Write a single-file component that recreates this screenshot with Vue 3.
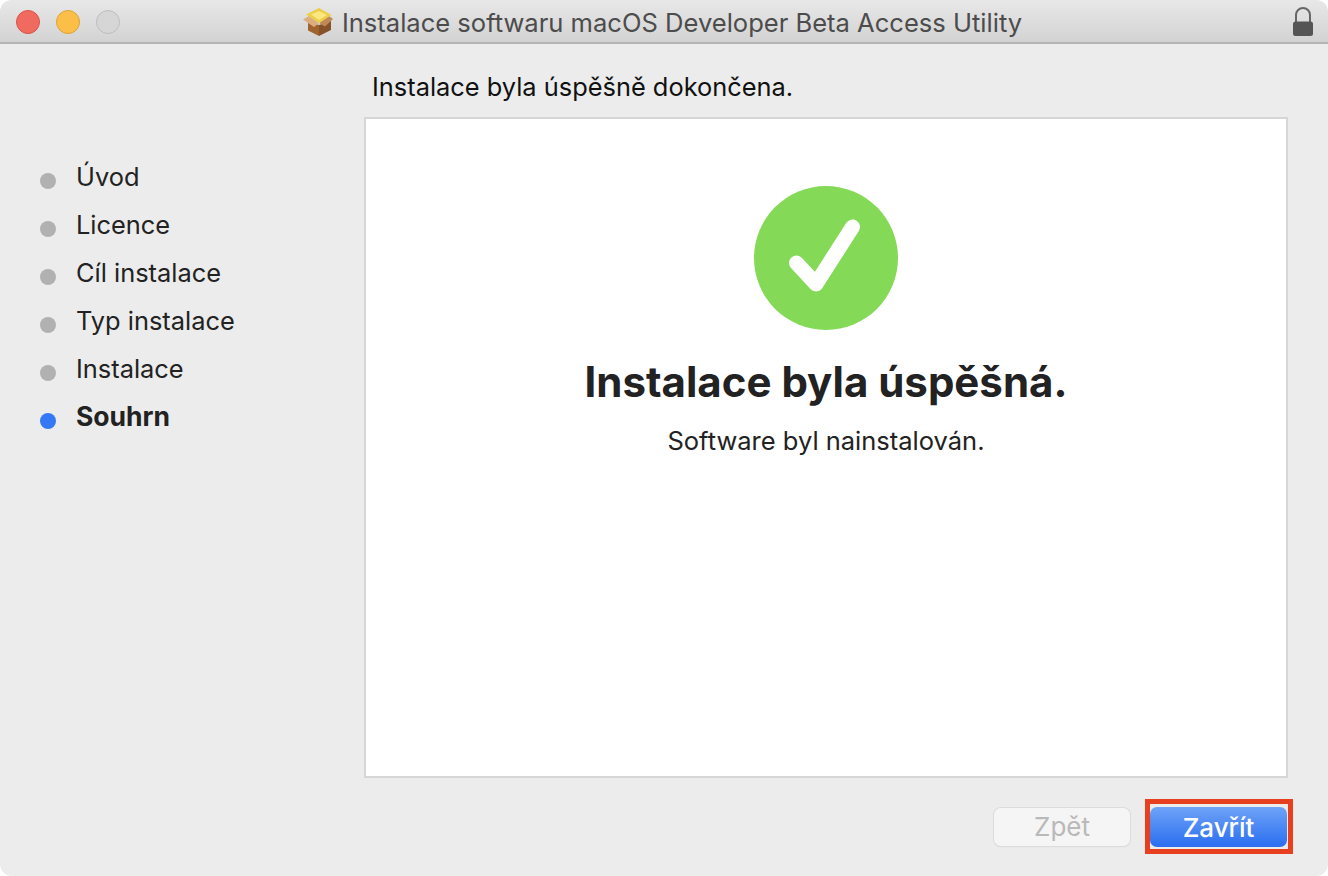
<template>
  <div class="window">
    <header class="titlebar">
      <div class="lights">
        <span class="light red"></span>
        <span class="light yellow"></span>
        <span class="light grey"></span>
      </div>
      <div class="title">
        <svg class="pkg" viewBox="0 0 30 28" width="30" height="28">
          <path d="M5 13 L16 17 L16 28 L5 22.5 Z" fill="#a0652f" />
          <path d="M16 17 L28 13 L28 22 L16 28 Z" fill="#87522a" />
          <path d="M6 8 L0 11.5 L11 19 L16 15 Z" fill="#dcae7e" />
          <path d="M26 8 L30 11 L22 18.5 L16 15 Z" fill="#c08a56" />
          <path d="M3 6.5 L16 0 L28.5 7 L16 15 Z" fill="#ecce48" />
          <path d="M8 6.5 L16 3 L24 7 L16 12 Z" fill="#fae77f" />
        </svg>
        <span>Instalace softwaru macOS Developer Beta Access Utility</span>
      </div>
      <div class="lock-wrap">
        <svg viewBox="0 0 22 30" width="22" height="30">
          <path d="M4 15 V8 a7 7 0 0 1 14 0 V15" fill="none" stroke="#666" stroke-width="2" />
          <rect x="1" y="14.5" width="20" height="14.5" rx="2.5" fill="#555" />
        </svg>
      </div>
    </header>

    <div class="content">
      <aside class="steps">
        <div v-for="step in steps" :key="step.label" class="step" :class="{ active: step.active }">
          <span class="dot"></span>
          <span class="step-label">{{ step.label }}</span>
        </div>
      </aside>

      <main class="main">
        <div class="heading">Instalace byla úspěšně dokončena.</div>
        <section class="panel">
          <svg class="check" viewBox="0 0 144 144" width="144" height="144">
            <circle cx="72" cy="72" r="72" fill="#84d957" />
            <path d="M42.5 77 L62 98 L98.5 41" fill="none" stroke="#fff" stroke-width="15" stroke-linecap="round" stroke-linejoin="round" />
          </svg>
          <h1>Instalace byla úspěšná.</h1>
          <p>Software byl nainstalován.</p>
        </section>
        <div class="actions">
          <button class="btn back" disabled>Zpět</button>
          <div class="highlight">
            <button class="btn close">Zavřít</button>
          </div>
        </div>
      </main>
    </div>
  </div>
</template>

<script setup>
const steps = [
  { label: 'Úvod' },
  { label: 'Licence' },
  { label: 'Cíl instalace' },
  { label: 'Typ instalace' },
  { label: 'Instalace' },
  { label: 'Souhrn', active: true },
]
</script>

<style>
html, body {
  margin: 0;
  background: #fff;
}
</style>

<style scoped>
.window {
  width: 1328px;
  height: 876px;
  display: flex;
  flex-direction: column;
  background: #ececec;
  border-radius: 12px;
  overflow: hidden;
  font-family: Inter, "Liberation Sans", sans-serif;
  color: #222;
}

.titlebar {
  height: 44px;
  flex: none;
  box-sizing: border-box;
  padding-top: 1px;
  display: grid;
  grid-template-columns: 1fr auto 1fr;
  align-items: center;
  background: linear-gradient(#e8e8e8, #d3d3d3);
  border-bottom: 2px solid #b4b4b4;
}

.lights {
  display: flex;
  gap: 16px;
  padding-left: 16px;
}

.light {
  width: 24px;
  height: 24px;
  border-radius: 50%;
  box-sizing: border-box;
}

.red {
  background: #f16a5f;
  border: 1px solid #d9534a;
}

.yellow {
  background: #fbbf47;
  border: 1px solid #dea236;
}

.grey {
  background: #d6d6d6;
  border: 1px solid #bdbdbd;
}

.title {
  display: flex;
  align-items: center;
  gap: 9px;
  margin: 1px 0 0 -3px;
  font-size: 25.55px;
  color: #4c4c4c;
  white-space: nowrap;
}

.lock-wrap {
  display: flex;
  justify-content: flex-end;
  padding-right: 14px;
}

.content {
  flex: 1;
  display: flex;
}

.steps {
  width: 364px;
  flex: none;
  box-sizing: border-box;
  padding: 109px 0 0 40px;
}

.step {
  height: 48px;
  display: flex;
  align-items: center;
  gap: 20px;
  font-size: 25.4px;
}

.step-label {
  margin-top: -2px;
}

.dot {
  width: 16px;
  height: 16px;
  border-radius: 50%;
  background: #b1b1b1;
  margin-top: 8px;
}

.step.active {
  font-weight: 700;
  font-size: 26.5px;
}

.step.active .dot {
  background: #3478f6;
}

.main {
  width: 924px;
  flex: none;
  display: flex;
  flex-direction: column;
}

.heading {
  height: 73px;
  box-sizing: border-box;
  padding: 26px 0 0 8px;
  font-size: 25.4px;
  line-height: 34px;
  color: #111;
}

.panel {
  height: 661px;
  box-sizing: border-box;
  background: #fff;
  border: 2px solid #d6d6d6;
  display: flex;
  flex-direction: column;
  align-items: center;
  padding-top: 67px;
}

.check {
  display: block;
}

h1 {
  margin: 22px 0 0;
  font-size: 42px;
  line-height: 60px;
  font-weight: 700;
  color: #222;
}

p {
  margin: 12px 0 0;
  font-size: 25.5px;
  line-height: 34px;
  color: #222;
}

.actions {
  display: flex;
  justify-content: flex-end;
  align-items: center;
  gap: 15px;
  margin-top: 21px;
  margin-right: -5px;
}

.highlight {
  display: flex;
  padding: 3px 1px 2px 0;
  border: 5px solid #e8401f;
}

.btn {
  box-sizing: border-box;
  border-radius: 7px;
  border: none;
  font-family: inherit;
  font-size: 26px;
  padding: 0;
}

.back {
  width: 136px;
  height: 38px;
  background: #f5f5f5;
  color: #b9b9b9;
  box-shadow: 0 0 0 1px #dcdcdc, 0 1px 1px #cfcfcf;
}

.close {
  width: 137px;
  height: 40px;
  background: linear-gradient(#6fa3f8, #2a6ef0);
  color: #fff;
  font-weight: 500;
}
</style>
